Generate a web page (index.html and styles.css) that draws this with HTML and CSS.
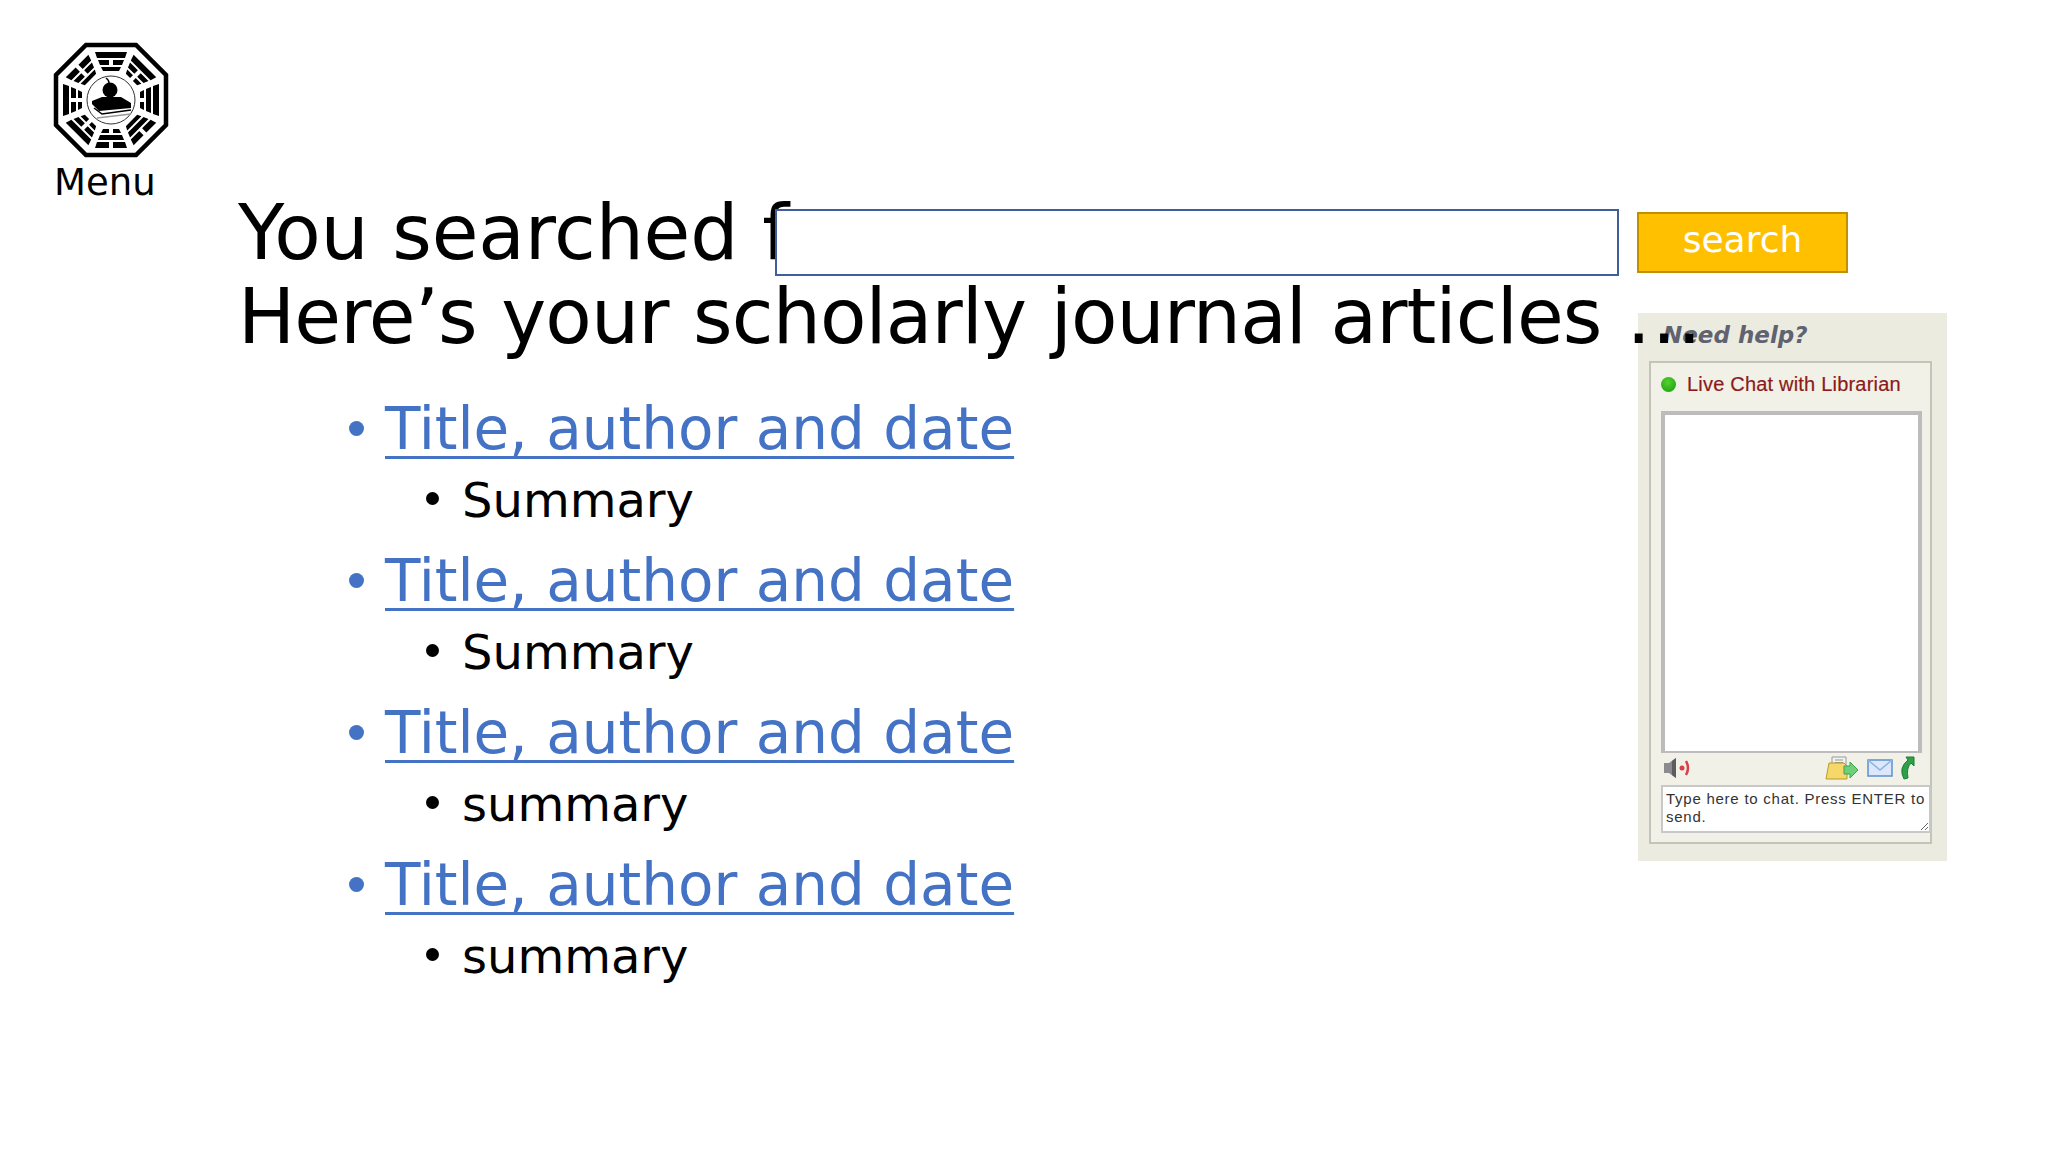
FILE: index.html
```html
<!DOCTYPE html>
<html lang="en">
<head>
<meta charset="utf-8">
<title>Search results</title>
<link rel="stylesheet" href="styles.css">
</head>
<body>
<div class="page">
  <nav class="menu">
    <svg class="logo" viewBox="0 0 120 120" width="120" height="120" aria-hidden="true">
      <defs>
        <path id="s1" d="M44 12H76L74 18H46Z"/>
        <path id="b1" d="M44 12H58V18H46ZM62 12H76L74 18H62Z"/>
        <path id="s2" d="M47 20H73L71 25H49Z"/>
        <path id="b2" d="M47 20H58V25H49ZM62 20H73L71 25H62Z"/>
        <path id="s3" d="M50 27H70L68 31H52Z"/>
        <path id="b3" d="M50 27H58V31H52ZM62 27H70L68 31H62Z"/>
      </defs>
      <path class="octagon" d="M35 5H85L115 35V85L85 115H35L5 85V35Z"/>
      <g><use href="#s1"/><use href="#b2"/><use href="#s3"/></g>
      <g transform="rotate(45 60 60)"><use href="#s1"/><use href="#b2"/><use href="#b3"/></g>
      <g transform="rotate(90 60 60)"><use href="#s1"/><use href="#s2"/><use href="#b3"/></g>
      <g transform="rotate(135 60 60)"><use href="#b1"/><use href="#s2"/><use href="#s3"/></g>
      <g transform="rotate(180 60 60)"><use href="#b1"/><use href="#s2"/><use href="#b3"/></g>
      <g transform="rotate(225 60 60)"><use href="#s1"/><use href="#b2"/><use href="#b3"/></g>
      <g transform="rotate(270 60 60)"><use href="#s1"/><use href="#b2"/><use href="#b3"/></g>
      <g transform="rotate(315 60 60)"><use href="#b1"/><use href="#b2"/><use href="#s3"/></g>
      <circle class="ring" cx="60" cy="60" r="24"/>
      <circle cx="59" cy="50" r="7.500"/>
      <path class="stem" d="M58 43Q58 40 55 38"/>
      <path d="M41 61L51 57H70L80 63V68L48 71L41 64Z"/>
      <path class="page-line" d="M43 68L51 74L80 70"/>
      <path class="page-line grey" d="M46 78L80 74"/>
    </svg>
    <span class="menu-label">Menu</span>
  </nav>

  <main class="content">
    <h1 class="heading"><span class="line-one">You searched for</span><br><span class="line-two">Here’s your scholarly journal articles …</span></h1>
    <ul class="results">
      <li><a href="#">Title, author and date</a>
        <ul><li>Summary</li></ul></li>
      <li><a href="#">Title, author and date</a>
        <ul><li>Summary</li></ul></li>
      <li><a href="#">Title, author and date</a>
        <ul><li>summary</li></ul></li>
      <li><a href="#">Title, author and date</a>
        <ul><li>summary</li></ul></li>
    </ul>
  </main>

  <form class="search">
    <input class="search-input" type="text" aria-label="Search">
    <button class="search-button" type="button">search</button>
  </form>

  <aside class="chat">
    <h2 class="chat-title">Need help?</h2>
    <div class="chat-box">
      <div class="chat-status"><span class="dot"></span>Live Chat with Librarian</div>
      <div class="chat-log"></div>
      <div class="chat-tools">
        <svg class="tool" viewBox="0 0 27 20" width="27" height="20" aria-hidden="true">
          <path d="M1 5H6L13 0V20L6 15H1Z" fill="#8a8b8c"/>
          <path d="M13 0V20L9 17V3Z" fill="#5c5d60"/>
          <circle cx="19" cy="10" r="2.500" fill="#d8404a"/>
          <path d="M23 3Q27 10 23 17" fill="none" stroke="#d8404a" stroke-width="2.500"/>
        </svg>
        <span class="tool-gap"></span>
        <svg class="tool tool-folder" viewBox="0 0 34 24" width="34" height="24" aria-hidden="true">
          <path d="M7 1H21V9H7Z" fill="#f2f2ee" stroke="#999"/>
          <path d="M10 4H18M10 6.500H18" stroke="#999"/>
          <path d="M4 7H19L22 10V23H1Z" fill="#f5d76a" stroke="#b89a2c"/>
          <path d="M19 10H25V6L33 14L25 22V18H19Z" fill="#6fd07a" stroke="#3da34a"/>
        </svg>
        <svg class="tool" viewBox="0 0 26 18" width="26" height="18" aria-hidden="true">
          <rect x="1" y="1" width="24" height="16" fill="#dbe8fb" stroke="#5f8fd0" stroke-width="1.500"/>
          <path d="M1 1L13 11L25 1" fill="none" stroke="#8fb2e3" stroke-width="1.500"/>
        </svg>
        <svg class="tool" viewBox="0 0 16 24" width="16" height="24" aria-hidden="true">
          <path d="M7 1H15V10L12 7Q7 12 9 22L5 23Q-1 12 9 4Z" fill="#2fa04a" stroke="#1d7d35"/>
        </svg>
      </div>
      <textarea class="chat-input" placeholder="Type here to chat. Press ENTER to send." aria-label="Chat message"></textarea>
    </div>
  </aside>
</div>
</body>
</html>
```
FILE: styles.css
```css
html, body {
  margin: 0;
  background: #fff;
}

.page {
  position: relative;
  width: 2048px;
  height: 1152px;
  overflow: hidden;
  font-family: "DejaVu Sans", sans-serif;
  color: #000;
}

.menu {
  display: flex;
  flex-direction: column;
  align-items: flex-start;
  padding: 40px 0 0 51px;
}

.logo {
  display: block;
  fill: #000;
}

.octagon {
  fill: #fff;
  stroke: #000;
  stroke-width: 4.500;
}

.ring {
  fill: #fff;
  stroke: #333;
  stroke-width: 1;
}

.stem,
.page-line {
  fill: none;
  stroke: #000;
  stroke-width: 1.500;
}

.page-line.grey {
  stroke: #999;
}

.menu-label {
  margin: 2px 0 0 3px;
  font-size: 37px;
  line-height: 42px;
}

.content {
  position: relative;
  z-index: 2;
  padding: 0 0 0 238px;
  margin-top: -13px;
}

.heading {
  margin: 0;
  font-size: 76px;
  font-weight: 400;
  line-height: 84px;
  white-space: nowrap;
}

.line-one {
  letter-spacing: -0.2px;
}

.line-two {
  letter-spacing: -0.88px;
  word-spacing: 1.2px;
}

.results {
  list-style: none;
  margin: 29px 0 0;
  padding: 0 0 0 147px;
  font-size: 58px;
  line-height: 82px;
  color: #4472c4;
}

.results > li {
  position: relative;
}

.results > li::before {
  content: "";
  position: absolute;
  left: -36px;
  top: 33px;
  width: 15px;
  height: 15px;
  border-radius: 50%;
  background: #4472c4;
}

.results a {
  color: inherit;
  text-decoration: underline;
  text-decoration-thickness: 3px;
  text-underline-offset: 7px;
}

.results ul {
  list-style: none;
  margin: 0;
  padding: 0 0 0 77px;
  font-size: 48px;
  line-height: 70px;
  color: #000;
  transform: translateY(-5px);
}

.results ul li {
  position: relative;
}

.results ul li::before {
  content: "";
  position: absolute;
  left: -36px;
  top: 27px;
  width: 13px;
  height: 13px;
  border-radius: 50%;
  background: #000;
}

.search {
  position: absolute;
  z-index: 3;
  left: 775px;
  top: 209px;
  display: flex;
  align-items: center;
  gap: 18px;
}

.search-input {
  box-sizing: border-box;
  width: 844px;
  height: 67px;
  margin: 0;
  padding: 0;
  background: #fff;
  border: 2px solid #3f5f9b;
  border-radius: 0;
  outline: none;
}

.search-button {
  box-sizing: border-box;
  width: 211px;
  height: 61px;
  margin: 0;
  padding: 0 0 7px;
  background: #ffc000;
  border: 2px solid #bf9000;
  color: #fff;
  font-family: inherit;
  font-size: 36px;
}

.chat {
  position: absolute;
  z-index: 1;
  left: 1638px;
  top: 313px;
  box-sizing: border-box;
  width: 309px;
  height: 548px;
  padding: 0 15px 0 11px;
  background: #ecebdf;
}

.chat-title {
  margin: 0;
  padding: 0 0 0 14px;
  height: 48px;
  font-size: 23px;
  font-weight: 700;
  font-style: italic;
  line-height: 44px;
  color: #5f6270;
}

.chat-box {
  box-sizing: border-box;
  height: 483px;
  padding: 0 0 0 10px;
  background: #f2f1e8;
  border: 2px solid #c4c4ba;
  display: flex;
  flex-direction: column;
  font-family: "Liberation Sans", sans-serif;
}

.chat-status {
  display: flex;
  align-items: center;
  gap: 11px;
  box-sizing: border-box;
  height: 48px;
  padding-bottom: 5px;
  font-size: 20px;
  letter-spacing: 0.2px;
  color: #8b1a1a;
  -webkit-text-stroke: 0.2px #8b1a1a;
  white-space: nowrap;
}

.dot {
  width: 15px;
  height: 15px;
  border-radius: 50%;
  background: radial-gradient(circle at 45% 35%, #55d12f, #139a0c);
}

.chat-log {
  box-sizing: border-box;
  width: 261px;
  height: 342px;
  background: #fff;
  border: 4px solid #bcbcbc;
  border-bottom-width: 2px;
}

.chat-tools {
  display: flex;
  align-items: center;
  gap: 6px;
  box-sizing: border-box;
  height: 32px;
  width: 254px;
  padding: 0 0 2px 2px;
}

.tool {
  display: block;
}

.tool-folder {
  margin-right: 2px;
}

.tool-gap {
  flex: 1;
}

.chat-input {
  box-sizing: border-box;
  width: 270px;
  height: 48px;
  margin: 0;
  padding: 3px 0 3px 3px;
  background: #fff;
  border: 2px solid #c8c8c8;
  border-radius: 0;
  outline: none;
  font-family: "Liberation Sans", sans-serif;
  font-size: 15px;
  letter-spacing: 0.75px;
  line-height: 18px;
  overflow: hidden;
}

.chat-input::placeholder {
  color: #333;
  opacity: 1;
}
```
